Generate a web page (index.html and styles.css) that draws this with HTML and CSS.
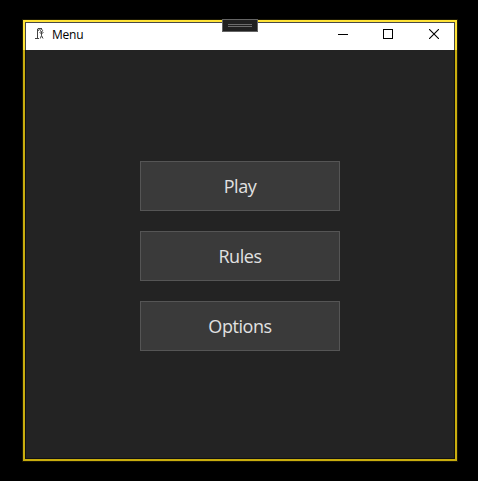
FILE: index.html
```html
<!DOCTYPE html>
<html lang="en">
<head>
<meta charset="utf-8">
<title>Menu</title>
<link rel="stylesheet" href="styles.css">
</head>
<body>
<div class="window">
  <div class="grip"><i></i><i></i></div>
  <header class="titlebar">
    <svg class="app-icon" width="10" height="13" viewBox="0 0 10 13" fill="none" stroke="#444">
      <path d="M2.5 11.5V2L3 1.5H7M2.5 4.5L4.5 2M0 11.5H4"/>
      <circle cx="6.5" cy="3.6" r="1.1"/>
      <path d="M6.5 4.5V8.5M4.5 5.5L6.5 6.5L8.5 5.5M6.5 8.5L5.3 11.5M6.5 8.5L8 11.5"/>
    </svg>
    <span class="title">Menu</span>
    <div class="controls">
      <svg width="10" height="10" viewBox="0 0 10 10" shape-rendering="crispEdges"><path d="M0 5.5H10" stroke="#000"/></svg>
      <svg width="10" height="10" viewBox="0 0 10 10" shape-rendering="crispEdges"><path d="M.5 .5H9.5V9.5H.5Z" fill="none" stroke="#000"/></svg>
      <svg width="10" height="10" viewBox="0 0 10 10"><path d="M0 0L10 10M10 0L0 10" stroke="#000" stroke-width="1.1"/></svg>
    </div>
  </header>
  <main class="menu">
    <button class="item">Play</button>
    <button class="item">Rules</button>
    <button class="item">Options</button>
  </main>
</div>
</body>
</html>
```
FILE: styles.css
```css
* { box-sizing: border-box; }
body {
  margin: 0;
  height: 481px;
  padding: 20px 0 0 23px;
  background: #000;
  font-family: "Open Sans", "Noto Sans", sans-serif;
  overflow: hidden;
}
.window {
  position: relative;
  display: flex;
  flex-direction: column;
  width: 434px;
  height: 441px;
  padding: 1px;
  border: 2px solid #c9ad0e;
  border-image: linear-gradient(#ffe338 30px, #c9ad0e 30px) 2;
  outline: 1px solid #1c1803;
  background: linear-gradient(#484848 28px, #111 28px);
}
.grip {
  position: absolute;
  left: 197px;
  top: -3px;
  width: 36px;
  height: 13px;
  padding: 4px 5px 0;
  border: 1px solid #646464;
  background: #202020;
}
.grip i {
  display: block;
  height: 1px;
  margin-bottom: 1px;
  background: #6c6c6c;
}
.titlebar {
  display: flex;
  align-items: center;
  flex: none;
  height: 27px;
  padding: 0 15px 4px 9px;
  background: #fff;
}
.app-icon { margin-bottom: 2px; }
.title {
  margin-left: 7px;
  font-size: 12px;
  line-height: 16px;
  letter-spacing: -0.25px;
  color: #000;
}
.controls {
  display: flex;
  gap: 35px;
  margin: 0 0 1px auto;
}
.controls svg { display: block; }
.controls svg:last-child { margin-left: 1px; }
.menu {
  flex: 1;
  display: flex;
  flex-direction: column;
  align-items: center;
  gap: 20px;
  padding-top: 111px;
  background: #232323;
}
.item {
  width: 200px;
  height: 50px;
  padding: 0;
  border: 1px solid #555;
  background: #3a3a3a;
  color: #e1e1e1;
  font: 18px/24px "Open Sans", "Noto Sans", sans-serif;
  letter-spacing: -0.45px;
}
```
